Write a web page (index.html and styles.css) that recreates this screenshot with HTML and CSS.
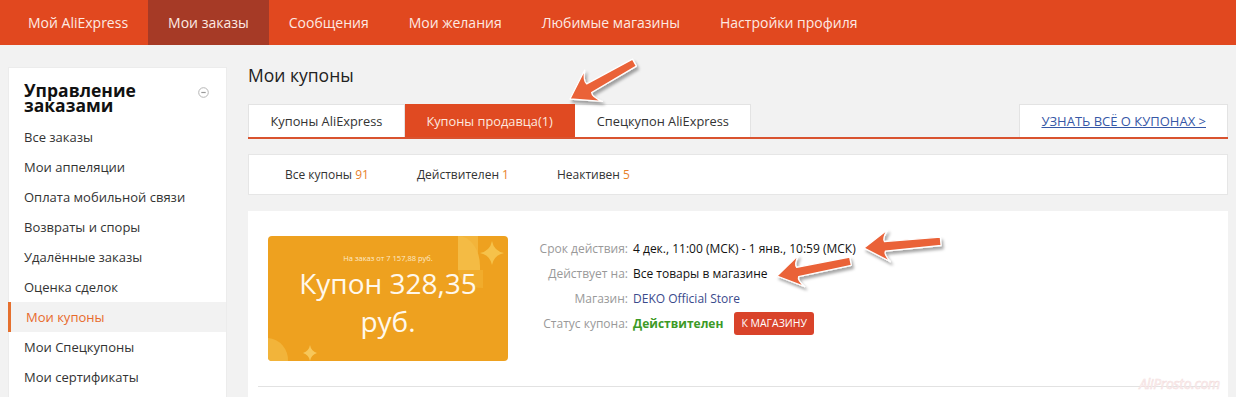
FILE: index.html
```html
<!DOCTYPE html>
<html lang="ru">
<head>
<meta charset="utf-8">
<title>Мои купоны</title>
<link rel="stylesheet" href="styles.css">
</head>
<body>
<header class="topbar">
  <nav class="topnav">
    <a class="topnav-item">Мой AliExpress</a>
    <a class="topnav-item is-active">Мои заказы</a>
    <a class="topnav-item">Сообщения</a>
    <a class="topnav-item">Мои желания</a>
    <a class="topnav-item">Любимые магазины</a>
    <a class="topnav-item">Настройки профиля</a>
  </nav>
</header>

<div class="layout">
  <aside class="sidebar">
    <div class="sidebar-head">
      <h2 class="sidebar-title">Управление заказами</h2>
      <svg class="collapse-icon" width="11" height="11" viewBox="0 0 11 11"><circle cx="5.5" cy="5.5" r="4.8" fill="none" stroke="#b5b5b5" stroke-width="1"/><line x1="3.3" y1="5.5" x2="7.7" y2="5.5" stroke="#999" stroke-width="1.2"/></svg>
    </div>
    <ul class="side-menu">
      <li class="side-item">Все заказы</li>
      <li class="side-item">Мои аппеляции</li>
      <li class="side-item">Оплата мобильной связи</li>
      <li class="side-item">Возвраты и споры</li>
      <li class="side-item">Удалённые заказы</li>
      <li class="side-item">Оценка сделок</li>
      <li class="side-item is-active">Мои купоны</li>
      <li class="side-item">Мои Спецкупоны</li>
      <li class="side-item">Мои сертификаты</li>
    </ul>
  </aside>

  <main class="main">
    <h1 class="page-title">Мои купоны</h1>

    <div class="tabs">
      <div class="tab">Купоны AliExpress</div>
      <div class="tab is-active">Купоны продавца(1)</div>
      <div class="tab">Спецкупон AliExpress</div>
      <div class="tabs-spacer"></div>
      <div class="tab tab-link"><a class="learn-link">УЗНАТЬ ВСЁ О КУПОНАХ &gt;</a></div>
    </div>

    <div class="filters">
      <span class="filter">Все купоны <b class="num">91</b></span>
      <span class="filter">Действителен <b class="num">1</b></span>
      <span class="filter">Неактивен <b class="num">5</b></span>
    </div>

    <section class="card">
      <div class="coupon-row">
        <div class="coupon">
          <svg class="coupon-deco" width="240" height="125" viewBox="0 0 240 125">
            <path d="M190 0 H210 V34 H190 Z" fill="#f3b43a"/>
            <path d="M190 0 A22 30 0 0 1 212 30 V34 H190 Z" fill="#f4bb44"/>
            <path d="M190 34 H215 V52 A25 18 0 0 1 190 34 Z" fill="#f1ac2c"/>
            <path d="M224 5 Q226 15 236 17 Q226 19 224 29 Q222 19 212 17 Q222 15 224 5 Z" fill="#f6c24a"/>
            <path d="M0 102 A22 22 0 0 1 20 125 H0 Z" fill="#f2b43a"/>
            <path d="M42 109 Q43 115 49 117 Q43 119 42 125 Q41 119 35 117 Q41 115 42 109 Z" fill="#f7c75a"/>
          </svg>
          <div class="coupon-text">
            <div class="coupon-min">На заказ от 7 157,88 руб.</div>
            <div class="coupon-value">Купон 328,35 руб.</div>
          </div>
        </div>
        <dl class="details">
          <dt>Срок действия:</dt><dd>4 дек., 11:00 (МСК) - 1 янв., 10:59 (МСК)</dd>
          <dt>Действует на:</dt><dd>Все товары в магазине</dd>
          <dt>Магазин:</dt><dd><a class="store-link">DEKO Official Store</a></dd>
          <dt>Статус купона:</dt><dd><span class="status">Действителен</span><span class="shop-btn">К МАГАЗИНУ</span></dd>
        </dl>
      </div>
      <div class="watermark">AliProsto.com</div>
    </section>
  </main>
</div>

<svg class="arrows" width="1236" height="397" viewBox="0 0 1236 397">
  <defs>
    <filter id="sh" x="-20%" y="-40%" width="150%" height="190%">
      <feDropShadow dx="2" dy="3" stdDeviation="1.8" flood-color="#000" flood-opacity="0.35"/>
    </filter>
  </defs>
  <g fill="#ea6238" stroke="#fff" stroke-width="1.3" stroke-linejoin="round" filter="url(#sh)">
    <path transform="translate(570 99) rotate(-29.4)" d="M0 0 L27 -18 Q20 -9 22 -5 L74 -4 L74 4 L22 5 Q20 9 27 18 Z"/>
    <path transform="translate(864 248) rotate(-5.2)" d="M0 0 L25 -16 Q19 -8 21 -4.5 L77 -4 L77 4.5 L21 5 Q19 8 25 16 Z"/>
    <path transform="translate(777 276) rotate(-11.6)" d="M0 0 L25 -16 Q19 -8 21 -4.5 L75 -4 L75 4.5 L21 5 Q19 8 25 16 Z"/>
  </g>
</svg>
</body>
</html>
```

FILE: styles.css
```css
* { box-sizing: border-box; }
html, body { margin: 0; padding: 0; }
body {
  background: #f2f2f2;
  font-family: "Open Sans", "DejaVu Sans", sans-serif;
  color: #333;
  width: 1236px;
  height: 397px;
  overflow: hidden;
  position: relative;
}
a { color: inherit; text-decoration: none; cursor: pointer; }
ul, dl, dd { margin: 0; padding: 0; list-style: none; }
h1, h2 { margin: 0; }

.topbar {
  height: 45px;
  background: #e1481f;
}
.topnav {
  display: flex;
  height: 45px;
  padding-left: 8px;
}
.topnav-item {
  display: flex;
  align-items: center;
  padding: 0 20px;
  font-size: 14px;
  color: #fdeae3;
  height: 45px;
}
.topnav-item.is-active { background: #a63a26; }

.layout {
  display: flex;
  align-items: flex-start;
  padding: 0 8px;
  gap: 21px;
}

.sidebar {
  width: 219px;
  margin-top: 22px;
  background: #fff;
  height: 340px;
  border: 1px solid #ececec;
  border-bottom: 0;
}
.sidebar-head {
  display: flex;
  justify-content: space-between;
  align-items: flex-start;
  padding: 14px 16px 0 15px;
}
.sidebar-title {
  font-size: 17.5px;
  font-weight: 700;
  line-height: 15px;
  color: #111;
  width: 140px;
  padding-top: 1px;
}
.collapse-icon { margin-top: 5px; margin-right: 1px; }
.side-menu { margin-top: 9px; }
.side-item {
  height: 30px;
  line-height: 30px;
  padding-left: 15px;
  font-size: 13px;
  color: #333;
}
.side-item.is-active {
  background: #f2f2f2;
  color: #e86a2c;
  border-left: 3px solid #e5702e;
  padding-left: 15px;
  margin-left: -1px;
}

.main {
  flex: 1;
  padding-top: 18px;
}
.page-title {
  font-size: 17.5px;
  font-weight: 400;
  line-height: 24px;
  color: #222;
}
.tabs {
  display: flex;
  margin-top: 17px;
  height: 35px;
  border-bottom: 2px solid #d9532f;
}
.tab {
  display: flex;
  align-items: center;
  padding: 0 21.5px;
  height: 33px;
  background: #fff;
  border: 1px solid #e3e3e3;
  border-bottom: 0;
  font-size: 12.8px;
  color: #333;
}
.tab + .tab { border-left: 0; }
.tab.is-active {
  background: #e04a22;
  color: #fde8df;
  border-color: #e04a22;
}
.tabs-spacer { flex: 1; }
.tab.tab-link { border-left: 1px solid #e3e3e3; padding: 0 21px; }
.learn-link {
  color: #3657a6;
  text-decoration: underline;
  font-size: 13px;
}

.filters {
  margin-top: 15px;
  height: 41px;
  background: #fff;
  border: 1px solid #e6e6e6;
  display: flex;
  align-items: center;
  gap: 48px;
  padding-left: 36px;
  font-size: 12px;
  color: #333;
}
.num { font-weight: 400; color: #e8822c; }

.card {
  margin-top: 16px;
  background: #fff;
  padding: 0 10px;
  height: 200px;
  position: relative;
}
.coupon-row {
  display: flex;
  padding: 25px 10px 25px;
  border-bottom: 1px solid #e2e2e2;
}
.coupon {
  position: relative;
  width: 240px;
  height: 125px;
  background: #eea11f;
  border-radius: 4px;
  overflow: hidden;
}
.coupon-deco { position: absolute; left: 0; top: 0; }
.coupon-text {
  position: relative;
  padding-top: 16px;
  text-align: center;
  color: #fff8ec;
}
.coupon-min {
  font-size: 7.5px;
  line-height: 12px;
  color: #fde9c8;
}
.coupon-value {
  font-size: 28px;
  line-height: 38px;
  padding: 0 24px;
}

.details {
  margin-left: 30px;
  display: grid;
  grid-template-columns: 90px auto;
  grid-auto-rows: 25px;
  column-gap: 5px;
  align-items: center;
  font-size: 12px;
  align-content: start;
}
.details dt { text-align: right; color: #999; }
.details dd { color: #111; display: flex; align-items: center; }
.store-link { color: #3a4a8c; }
.status { color: #3c9a26; font-weight: 700; }
.shop-btn {
  margin-left: 11px;
  background: #d9432a;
  color: #fff;
  font-size: 10.5px;
  height: 23px;
  line-height: 23px;
  padding: 0 7px;
  border-radius: 3px;
}

.watermark {
  position: absolute;
  right: 8px;
  top: 163px;
  font-size: 14px;
  font-style: italic;
  color: #fdf3f3;
  -webkit-text-stroke: 0.5px #f3dcdc;
  letter-spacing: -0.3px;
}

.arrows {
  position: absolute;
  left: 0;
  top: 0;
  pointer-events: none;
}
```
